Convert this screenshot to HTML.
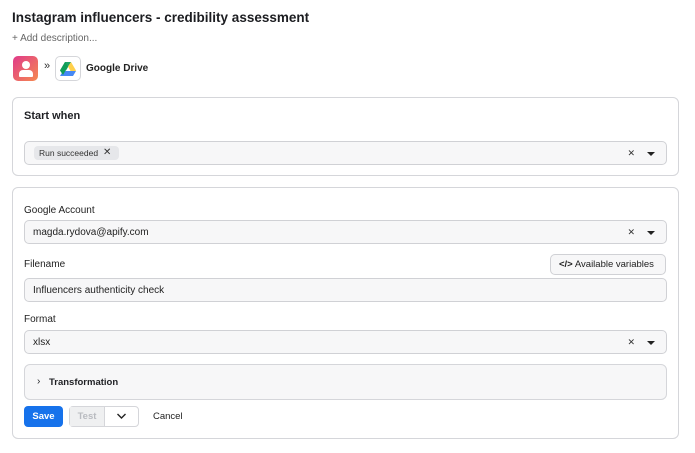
<!DOCTYPE html>
<html><head><style>
*{box-sizing:border-box;margin:0;padding:0}
body{width:695px;height:453px;background:#fff;font-family:"Liberation Sans",sans-serif;color:#1f2024;position:relative;overflow:hidden}
.a{position:absolute}
.card{position:absolute;left:12px;width:667px;border:1px solid #d5d6da;border-radius:6px;background:#fff}
.inp{position:absolute;left:24px;width:643px;height:24px;border:1px solid #d0d1d5;border-radius:5px;background:#f7f7f8;font-size:10px;padding-left:8px;line-height:23px;color:#222}
.lbl{position:absolute;left:24px;font-size:10px;color:#222}
.x{position:absolute;right:31px;top:6px;font-size:9px;color:#333;line-height:11px}
.dd{position:absolute;right:11px;top:10px;width:0;height:0;border-left:4px solid transparent;border-right:4px solid transparent;border-top:4px solid #222}
</style></head><body>
<div class="a" style="left:12px;top:10px;font-size:13.5px;font-weight:bold;color:#1c1d21">Instagram influencers - credibility assessment</div>
<div class="a" style="left:12px;top:33px;font-size:10px;color:#666">+ Add description...</div>
<div class="a" style="left:13px;top:56px;width:25px;height:25px;border-radius:5px;background:linear-gradient(135deg,#e03a8a,#f58a50)">
<div class="a" style="left:9px;top:5px;width:8px;height:8px;border-radius:50%;background:#fff"></div>
<div class="a" style="left:6px;top:14px;width:14px;height:7px;border-radius:4px 4px 1px 1px;background:#fff"></div></div>
<div class="a" style="left:44px;top:60px;font-size:11px;color:#333">»</div>
<div class="a" style="left:55px;top:56px;width:26px;height:25px;border:1px solid #d5d6da;border-radius:5px;background:#fff">
<svg width="16" height="14" viewBox="0 0 16 14" style="position:absolute;left:4px;top:5px"><path d="M5 0h6l-5 8.5H0z" fill="#1fa463"/><path d="M11 0l5 8.5-3 5L8 4.5z" fill="#ffd04b"/><path d="M3 9h13l-3 5H0z" fill="#4688f4"/><path d="M5 0L8 4.5 3 13 0 8.5z" fill="#0f9d58"/></svg></div>
<div class="a" style="left:86px;top:63px;font-size:10px;font-weight:bold;color:#222">Google Drive</div>

<div class="card" style="top:97px;height:79px"></div>
<div class="a" style="left:24px;top:110px;font-size:11px;font-weight:bold">Start when</div>
<div class="inp" style="top:141px">
<div class="a" style="left:9px;top:4px;width:85px;height:14px;border-radius:4px;background:#e6e7ea;font-size:8.5px;line-height:14px;padding-left:5px;color:#333">Run succeeded <span style="position:absolute;left:69px;font-size:10px">✕</span></div>
<span class="x">✕</span><span class="dd"></span></div>

<div class="card" style="top:187px;height:252px"></div>
<div class="lbl" style="top:205px">Google Account</div>
<div class="inp" style="top:220px">magda.rydova@apify.com<span class="x">✕</span><span class="dd"></span></div>
<div class="lbl" style="top:259px">Filename</div>
<div class="a" style="left:550px;top:254px;width:116px;height:21px;border:1px solid #d0d1d5;border-radius:5px;background:#f7f7f8;font-size:9.5px;line-height:19px;padding-left:8px;color:#222"><b>&lt;/&gt;</b> Available variables</div>
<div class="inp" style="top:278px">Influencers authenticity check</div>
<div class="lbl" style="top:314px">Format</div>
<div class="inp" style="top:330px">xlsx<span class="x">✕</span><span class="dd"></span></div>
<div class="a" style="left:24px;top:364px;width:643px;height:36px;border:1px solid #d5d6da;border-radius:6px;background:#f7f7f8">
<div class="a" style="left:12px;top:11px;font-size:10px">›</div>
<div class="a" style="left:24px;top:12px;font-size:9.5px;font-weight:bold">Transformation</div></div>
<div class="a" style="left:24px;top:406px;width:39px;height:21px;border-radius:4px;background:#1672eb;color:#fff;font-size:9.5px;font-weight:bold;line-height:21px;text-align:center">Save</div>
<div class="a" style="left:69px;top:406px;width:70px;height:21px;border:1px solid #d5d6da;border-radius:4px;background:#fff"></div>
<div class="a" style="left:70px;top:407px;width:35px;height:19px;background:#eff0f1;color:#b9bbc0;font-size:9.5px;font-weight:bold;line-height:19px;text-align:center;border-right:1px solid #d5d6da">Test</div>
<svg class="a" style="left:116px;top:412px" width="11" height="8" viewBox="0 0 11 8"><path d="M1.5 2l4 4 4-4" stroke="#222" stroke-width="1.4" fill="none"/></svg>
<div class="a" style="left:153px;top:411px;font-size:9.5px;color:#222">Cancel</div>
</body></html>
